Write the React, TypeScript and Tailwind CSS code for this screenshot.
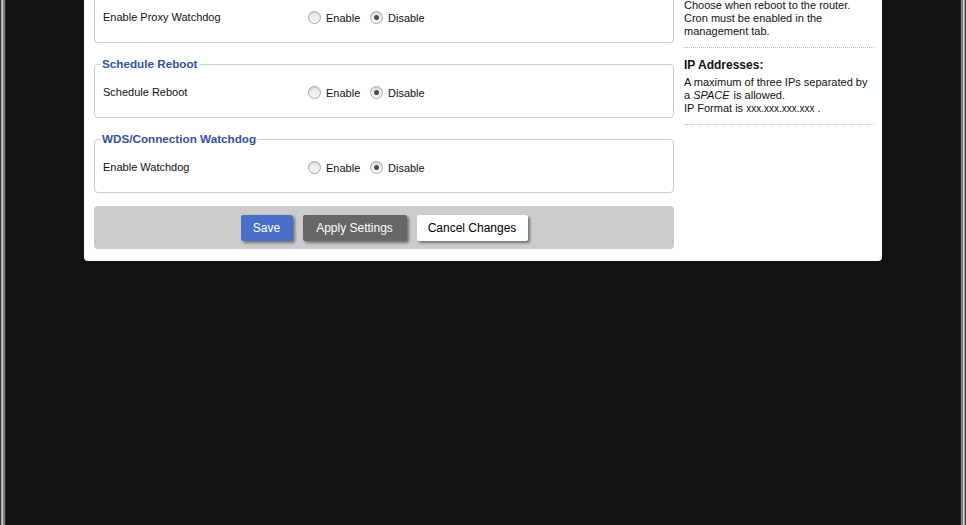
import React from 'react';

const font = "font-['Liberation_Sans',Arial,sans-serif]";

function Radio({ checked }: { checked?: boolean }) {
  return (
    <span className="relative inline-flex h-[13px] w-[13px] items-center justify-center rounded-full border border-[#a9a9a9] bg-gradient-to-b from-[#e6e6e6] to-[#f7f7f7] shadow-[inset_0_1px_1px_rgba(0,0,0,0.12)]">
      {checked && <span className="h-[5px] w-[5px] rounded-full bg-[#4d4d4d]" />}
    </span>
  );
}

function SettingRow({ label, enabled = false }: { label: string; enabled?: boolean }) {
  return (
    <div className="flex h-[20px] items-center">
      <div className="w-[205px] text-[11px]">{label}</div>
      <label className="flex w-[62px] items-center gap-[5px] text-[11px]">
        <Radio checked={enabled} />
        <span className="pt-[3px]">Enable</span>
      </label>
      <label className="flex items-center gap-[5px] text-[11px]">
        <Radio checked={!enabled} />
        <span className="pt-[3px]">Disable</span>
      </label>
    </div>
  );
}

function Section({ title, children }: { title: string; children: React.ReactNode }) {
  return (
    <fieldset className="mt-[14px] rounded-[4px] border border-[#cccccc] px-[8px] pb-[15px]">
      <legend className="-ml-[3px] px-[2px] text-[11.7px] font-bold leading-[14px] text-[#33529e]">{title}</legend>
      <div className="pt-[11px]">{children}</div>
    </fieldset>
  );
}

function EdgeLeft() {
  return (
    <div className="flex h-full shrink-0">
      <div className="w-px bg-[#3a3a3a]" />
      <div className="w-px bg-[#a0a0a0]" />
      <div className="w-px bg-[#d4d4d4]" />
      <div className="w-[2px] bg-[#7c7c7c]" />
      <div className="w-px bg-[#2a2a2a]" />
    </div>
  );
}

function EdgeRight() {
  return (
    <div className="flex h-full shrink-0">
      <div className="w-px bg-[#2a2a2a]" />
      <div className="w-[2px] bg-[#7c7c7c]" />
      <div className="w-px bg-[#d4d4d4]" />
      <div className="w-px bg-[#a0a0a0]" />
      <div className="w-px bg-[#3a3a3a]" />
    </div>
  );
}

export default function App() {
  return (
    <div className={`flex h-[525px] w-[966px] overflow-hidden bg-[#121212] text-[#111] ${font}`}>
      <EdgeLeft />
      <div className="flex-1">
        <div className="ml-[78px] flex w-[798px] gap-[10px] rounded-b-[4px] bg-white pb-[12px] pl-[10px] pr-[8px]">
          {/* Main settings column */}
          <div className="w-[580px] shrink-0">
            <div className="rounded-b-[4px] border-x border-b border-[#cccccc] px-[8px] pt-[7px] pb-[15px]">
              <SettingRow label="Enable Proxy Watchdog" />
            </div>

            <Section title="Schedule Reboot">
              <SettingRow label="Schedule Reboot" />
            </Section>

            <Section title="WDS/Connection Watchdog">
              <SettingRow label="Enable Watchdog" />
            </Section>

            <div className="mt-[13px] flex h-[43px] items-start justify-center gap-[10px] rounded-[4px] bg-[#cccccc] pt-[9px]">
              <button className="h-[26px] w-[52px] rounded-[2px] bg-[#4a6fc8] text-[12px] text-white shadow-[2px_2px_3px_rgba(0,0,0,0.45)]">
                Save
              </button>
              <button className="h-[26px] w-[104px] rounded-[2px] bg-[#666666] text-[12px] text-white shadow-[2px_2px_3px_rgba(0,0,0,0.45)]">
                Apply Settings
              </button>
              <button className="h-[26px] w-[111px] rounded-[2px] bg-white text-[12px] text-black shadow-[2px_2px_3px_rgba(0,0,0,0.45)]">
                Cancel Changes
              </button>
            </div>
          </div>

          {/* Help column */}
          <div className="w-[190px] text-[11px] leading-[13px]">
            <div className="-mt-[1px] border-b border-dotted border-[#bbbbbb] pb-[9px]">
              <div>Choose when reboot to the router.</div>
              <div>Cron must be enabled in the</div>
              <div>management tab.</div>
            </div>
            <div className="border-b border-dotted border-[#bbbbbb] pt-[10px] pb-[9px]">
              <div className="text-[12px] font-bold leading-[14px]">IP Addresses:</div>
              <div className="mt-[4px]">
                <div>A maximum of three IPs separated by</div>
                <div className="flex gap-[3px]">
                  <span>a</span>
                  <i className="pr-[1px]">SPACE</i>
                  <span>is allowed.</span>
                </div>
                <div>
                  IP Format is <span className="text-[10px]">xxx.xxx.xxx.xxx</span> .
                </div>
              </div>
            </div>
          </div>
        </div>
      </div>
      <EdgeRight />
    </div>
  );
}
